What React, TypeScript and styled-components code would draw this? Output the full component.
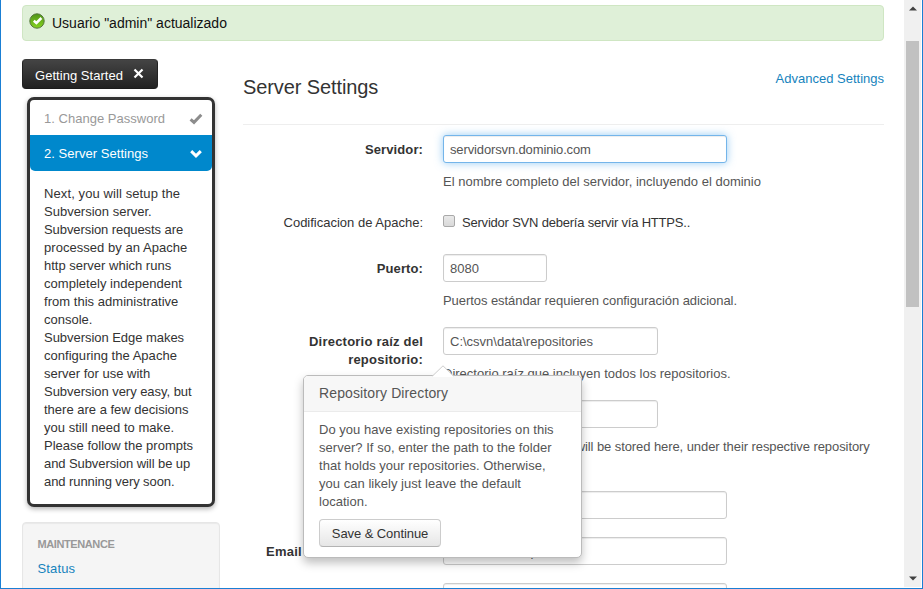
import React from 'react';
import styled, { createGlobalStyle, css } from 'styled-components';

const GlobalStyle = createGlobalStyle`
  * { box-sizing: border-box; }
  html, body { margin: 0; padding: 0; overflow: hidden; }
  body {
    font-family: "Liberation Sans", Arial, sans-serif;
    font-size: 13px;
    line-height: 18px;
    color: #333;
    background: #fff;
  }
`;

const Window = styled.div`
  display: grid;
  grid-template-columns: 1fr 17px;
  width: 923px;
  height: 589px;
  overflow: hidden;
  padding-right: 1px;
  border: solid #1a7fd4;
  border-width: 0 1px 1px 1px;
  background: #fff;
`;

const Viewport = styled.main`
  height: 588px;
  overflow: hidden;
  padding: 5px 20px 0 21px;
`;

const Scrollbar = styled.div`
  display: flex;
  flex-direction: column;
  height: 587px;
  background: #f0f0f0;
`;

const ScrollButton = styled.div`
  display: flex;
  align-items: center;
  justify-content: center;
  height: 17px;
  flex: none;
`;

const ScrollTrack = styled.div`
  flex: 1;
  padding: 24px 2px 0 2px;
`;

const ScrollThumb = styled.div`
  height: 266px;
  background: #c1c1c1;
`;

const Spaced = styled.span<{ $ls: number }>`
  letter-spacing: ${(p) => p.$ls}px;
  white-space: nowrap;
`;

const Alert = styled.div`
  display: flex;
  align-items: center;
  height: 36px;
  padding: 0 6px;
  gap: 7px;
  font-size: 14px;
  color: #111;
  background: #dff0d8;
  border: 1px solid #cfe6c3;
  border-radius: 4px;

  svg { margin-top: -5px; }
`;

const Columns = styled.div`
  display: grid;
  grid-template-columns: 198px 641px;
  column-gap: 23px;
  margin-top: 18px;
`;

const Sidebar = styled.aside`
  display: flex;
  flex-direction: column;
`;

const TourButton = styled.button`
  display: flex;
  align-items: center;
  gap: 10px;
  align-self: flex-start;
  width: 136px;
  height: 30px;
  padding: 3px 0 0 12px;
  font: inherit;
  color: #fff;
  background: linear-gradient(#444, #222);
  border: 1px solid #222;
  border-color: #3a3a3a #222 #1c1c1c;
  border-radius: 4px;

  svg { margin-top: -5px; }
`;

const TourBox = styled.section`
  width: 188px;
  height: 410px;
  margin: 8px 0 0 5px;
  border: 3px solid #333;
  border-radius: 7px;
  background: #fff;
  box-shadow: 0 2px 5px rgba(0, 0, 0, 0.3);
`;

const Step = styled.div<{ $active?: boolean }>`
  display: flex;
  align-items: center;
  justify-content: space-between;
  height: 35px;
  padding: 2px 9px 0 14px;
  color: #999;
  ${(p) =>
    p.$active &&
    css`
      height: 36px;
      color: #fff;
      background: #0088cc;
      border-radius: 0 0 5px 5px;
    `}
`;

const TourText = styled.p`
  margin: 0;
  padding: 14px 0 0 14px;
  white-space: nowrap;
`;

const Line = styled.span<{ $ls?: number }>`
  display: block;
  white-space: nowrap;
  letter-spacing: ${(p) => p.$ls ?? 0.03}px;
`;

const Well = styled.nav`
  height: 120px;
  margin-top: 15px;
  padding: 12px 14.5px;
  background: #f5f5f5;
  border: 1px solid #e6e6e6;
  border-radius: 4px;
  box-shadow: inset 0 1px 1px rgba(0, 0, 0, 0.05);
`;

const NavHeader = styled.div`
  height: 25px;
  font-size: 11px;
  font-weight: bold;
  letter-spacing: -0.4px;
  color: #999;
`;

const Link = styled.a`
  color: #1683bd;
`;

const Header = styled.header`
  display: flex;
  justify-content: space-between;
  height: 66px;
  padding-top: 11px;
  border-bottom: 1px solid #eee;
`;

const Title = styled.h1`
  margin: 3px 0 0;
  font-size: 20px;
  font-weight: normal;
  line-height: 28px;
  letter-spacing: -0.1px;
`;

const Form = styled.form`
  display: flex;
  flex-direction: column;
  gap: 18px;
  padding-top: 10px;
`;

const Row = styled.div`
  display: grid;
  grid-template-columns: 180px 441px;
  column-gap: 20px;
`;

const Label = styled.label<{ $plain?: boolean; $ls?: number }>`
  padding-top: 6px;
  text-align: right;
  white-space: pre-line;
  font-weight: ${(p) => (p.$plain ? 'normal' : 'bold')};
  letter-spacing: ${(p) => p.$ls ?? 0.1}px;
  height: 28px;
`;

const Field = styled.div`
  position: relative;
  min-height: 28px;
`;

const Input = styled.input<{ $w: number; $focus?: boolean; $ls?: number }>`
  display: block;
  width: ${(p) => p.$w}px;
  height: 28px;
  padding: 0 6px;
  font: inherit;
  letter-spacing: ${(p) => p.$ls ?? 0}px;
  color: #555;
  background: #fff;
  border: 1px solid #ccc;
  border-radius: 3px;
  outline: 0;
  box-shadow: inset 0 1px 1px rgba(0, 0, 0, 0.075);
  ${(p) =>
    p.$focus &&
    css`
      border-color: #74b5ea;
      box-shadow: inset 0 1px 1px rgba(0, 0, 0, 0.075), 0 0 8px rgba(82, 168, 236, 0.6);
    `}
`;

const Help = styled.p<{ $ls?: number }>`
  margin: 10px 0 -1px;
  color: #555;
  letter-spacing: ${(p) => p.$ls ?? 0}px;
`;

const CheckLine = styled.label`
  display: flex;
  align-items: center;
  gap: 7px;
  padding-top: 6px;
`;

const CheckBox = styled.span`
  width: 12px;
  height: 12px;
  margin-top: -4px;
  border: 1px solid #a9a9a9;
  border-radius: 2px;
  background: linear-gradient(#e9e9e9, #d9d9d9);
`;

const Popover = styled.div`
  position: absolute;
  z-index: 2;
  top: 48px;
  left: -140px;
  width: 279px;
  height: 183px;
  background: #fff;
  border: 1px solid #bbb;
  border-radius: 5px;
  box-shadow: 0 5px 10px rgba(0, 0, 0, 0.25);
`;

const Arrow = styled.svg`
  position: absolute;
  top: -11px;
  left: 128px;
`;

const PopoverTitle = styled.h3`
  height: 36px;
  margin: 0;
  padding: 8px 15px 0;
  font-size: 14px;
  font-weight: normal;
  letter-spacing: 0.12px;
  color: #555;
  background: #f7f7f7;
  border-bottom: 1px solid #ebebeb;
  border-radius: 4px 4px 0 0;
`;

const PopoverBody = styled.div`
  padding: 9px 15px 0;
  color: #555;
`;

const SaveButton = styled.button`
  display: block;
  width: 122px;
  height: 28px;
  margin-top: 8px;
  padding: 2px 0 0;
  font: inherit;
  letter-spacing: -0.08px;
  color: #333;
  background: linear-gradient(#fff, #e6e6e6);
  border: 1px solid #ccc;
  border-bottom-color: #b3b3b3;
  border-radius: 4px;
`;

const tourLines: [string, number][] = [
  ['Next, you will setup the', 0.1],
  ['Subversion server.', 0],
  ['Subversion requests are', -0.08],
  ['processed by an Apache', 0.04],
  ['http server which runs', 0],
  ['completely independent', 0.03],
  ['from this administrative', 0.03],
  ['console.', 0],
  ['Subversion Edge makes', -0.04],
  ['configuring the Apache', 0.03],
  ['server for use with', 0],
  ['Subversion very easy, but', -0.04],
  ['there are a few decisions', 0],
  ['you still need to make.', 0.03],
  ['Please follow the prompts', 0.01],
  ['and Subversion will be up', -0.08],
  ['and running very soon.', -0.08],
];

const popoverLines = [
  'Do you have existing repositories on this',
  'server? If so, enter the path to the folder',
  'that holds your repositories. Otherwise,',
  'you can likely just leave the default',
  'location.',
];

const SuccessIcon = () => (
  <svg width="16" height="16" viewBox="0 0 16 16">
    <defs>
      <linearGradient id="ok" x1="0" y1="0" x2="0" y2="1">
        <stop offset="0" stopColor="#4f9418" />
        <stop offset="1" stopColor="#86d420" />
      </linearGradient>
    </defs>
    <circle cx="8" cy="8" r="7.2" fill="url(#ok)" stroke="#55773c" strokeWidth="1" />
    <path d="M4.8 7.8 L7.4 10 L12.4 5" fill="none" stroke="#fff" strokeWidth="2.5" />
  </svg>
);

export default function App() {
  return (
    <>
      <GlobalStyle />
      <Window>
        <Viewport>
          <Alert>
            <SuccessIcon />
            <span>Usuario "admin" actualizado</span>
          </Alert>
          <Columns>
            <Sidebar>
              <TourButton type="button">
                <Spaced $ls={0.04}>Getting Started</Spaced>
                <svg width="11" height="11" viewBox="0 0 11 11">
                  <path d="M1.5 1.5 L9.5 9.5 M9.5 1.5 L1.5 9.5" stroke="#fff" strokeWidth="2.2" />
                </svg>
              </TourButton>
              <TourBox>
                <Step>
                  <Spaced $ls={0.02}>1. Change Password</Spaced>
                  <svg width="14" height="12" viewBox="0 0 14 12">
                    <path d="M1.6 6.3 L5 9.4 L12.3 1.8" fill="none" stroke="#8c8c8c" strokeWidth="3" />
                  </svg>
                </Step>
                <Step $active>
                  <Spaced $ls={0.04}>2. Server Settings</Spaced>
                  <svg width="14" height="10" viewBox="0 0 14 10">
                    <path d="M2.2 2.2 L7 6.8 L11.8 2.2" fill="none" stroke="#fff" strokeWidth="3" />
                  </svg>
                </Step>
                <TourText>
                  {tourLines.map(([text, ls]) => (
                    <Line key={text} $ls={ls}>{text}</Line>
                  ))}
                </TourText>
              </TourBox>
              <Well>
                <NavHeader>MAINTENANCE</NavHeader>
                <Link>
                  <Spaced $ls={0.15}>Status</Spaced>
                </Link>
              </Well>
            </Sidebar>
            <section>
              <Header>
                <Title>Server Settings</Title>
                <Link>Advanced Settings</Link>
              </Header>
              <Form>
                <Row>
                  <Label>Servidor:</Label>
                  <Field>
                    <Input $w={284} $focus $ls={-0.13} readOnly value="servidorsvn.dominio.com" />
                    <Help>El nombre completo del servidor, incluyendo el dominio</Help>
                  </Field>
                </Row>
                <Row>
                  <Label $plain $ls={0}>Codificacion de Apache:</Label>
                  <Field>
                    <CheckLine>
                      <CheckBox />
                      <Spaced $ls={-0.21}>Servidor SVN debería servir vía HTTPS..</Spaced>
                    </CheckLine>
                  </Field>
                </Row>
                <Row>
                  <Label>Puerto:</Label>
                  <Field>
                    <Input $w={104} readOnly value="8080" />
                    <Help $ls={-0.06}>Puertos estándar requieren configuración adicional.</Help>
                  </Field>
                </Row>
                <Row>
                  <Label $ls={0.22}>{'Directorio raíz del\nrepositorio:'}</Label>
                  <Field>
                    <Input $w={215} readOnly value="C:\csvn\data\repositories" />
                    <Help>Directorio raíz que incluyen todos los repositorios.</Help>
                    <Popover>
                      <Arrow width="22" height="12" viewBox="0 0 22 12">
                        <path d="M0.5 11 L11 0.8 L21.5 11 V12 H0.5 Z" fill="#fff" />
                        <path d="M0.5 11 L11 0.8 L21.5 11" fill="none" stroke="#ccc" />
                      </Arrow>
                      <PopoverTitle>Repository Directory</PopoverTitle>
                      <PopoverBody>
                        {popoverLines.map((text) => (
                          <Line key={text}>{text}</Line>
                        ))}
                        <SaveButton type="button">Save &amp; Continue</SaveButton>
                      </PopoverBody>
                    </Popover>
                  </Field>
                </Row>
                <Row>
                  <Label />
                  <Field>
                    <Input $w={215} readOnly value="" />
                    <Help>
                      <Line $ls={-0.08}>The backup dump files will be stored here, under their respective repository</Line>
                      <Line>name</Line>
                    </Help>
                  </Field>
                </Row>
                <Row>
                  <Label />
                  <Field>
                    <Input $w={284} readOnly value="" />
                  </Field>
                </Row>
                <Row>
                  <Label $ls={0.22}>Email del administrador:</Label>
                  <Field>
                    <Input $w={284} readOnly value="admin@example.com" />
                  </Field>
                </Row>
                <Row>
                  <Label />
                  <Field>
                    <Input $w={284} readOnly value="" />
                  </Field>
                </Row>
              </Form>
            </section>
          </Columns>
        </Viewport>
        <Scrollbar>
          <ScrollButton>
            <svg width="8" height="5" viewBox="0 0 8 5"><path d="M0 4.5 L4 0.5 L8 4.5 Z" fill="#404040" /></svg>
          </ScrollButton>
          <ScrollTrack>
            <ScrollThumb />
          </ScrollTrack>
          <ScrollButton>
            <svg width="8" height="5" viewBox="0 0 8 5"><path d="M0 0.5 L4 4.5 L8 0.5 Z" fill="#404040" /></svg>
          </ScrollButton>
        </Scrollbar>
      </Window>
    </>
  );
}
